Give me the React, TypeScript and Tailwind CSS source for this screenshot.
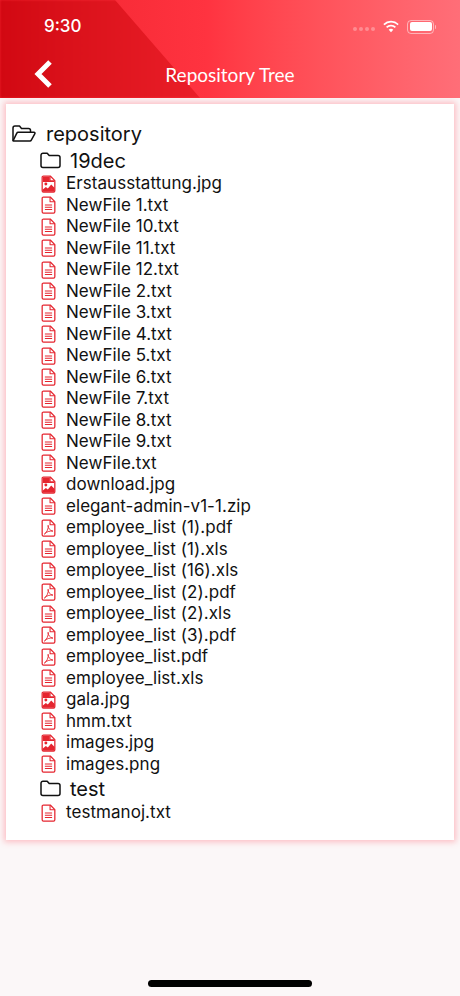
type Kind = 'txt' | 'img' | 'pdf'

const files: [string, Kind][] = [
    ['Erstausstattung.jpg', 'img'],
    ['NewFile 1.txt', 'txt'],
    ['NewFile 10.txt', 'txt'],
    ['NewFile 11.txt', 'txt'],
    ['NewFile 12.txt', 'txt'],
    ['NewFile 2.txt', 'txt'],
    ['NewFile 3.txt', 'txt'],
    ['NewFile 4.txt', 'txt'],
    ['NewFile 5.txt', 'txt'],
    ['NewFile 6.txt', 'txt'],
    ['NewFile 7.txt', 'txt'],
    ['NewFile 8.txt', 'txt'],
    ['NewFile 9.txt', 'txt'],
    ['NewFile.txt', 'txt'],
    ['download.jpg', 'img'],
    ['elegant-admin-v1-1.zip', 'txt'],
    ['employee_list (1).pdf', 'pdf'],
    ['employee_list (1).xls', 'txt'],
    ['employee_list (16).xls', 'txt'],
    ['employee_list (2).pdf', 'pdf'],
    ['employee_list (2).xls', 'txt'],
    ['employee_list (3).pdf', 'pdf'],
    ['employee_list.pdf', 'pdf'],
    ['employee_list.xls', 'txt'],
    ['gala.jpg', 'img'],
    ['hmm.txt', 'txt'],
    ['images.jpg', 'img'],
    ['images.png', 'txt'],
]

const DOC = "M2.5 .8H9.500L14.200 5.500V16a1.300 1.300 0 0 1-1.300 1.300H2.500A1.300 1.300 0 0 1 1.200 16V2.100A1.300 1.300 0 0 1 2.500 .8z"

function FileIcon({ kind }: { kind: Kind }) {
    return (
        <svg width="15" height="18" viewBox="0 0 15.400 18" fill="none" stroke="#e5252f" strokeWidth="1.300" strokeLinejoin="round">
            <path d={DOC} />
            <path d="M9.300 1V5.700H14" strokeWidth="1.100" />
            {kind === 'txt' && (
                <path d="M4 9H11.400M4 11.300H11.400M4 13.600H11.400" strokeWidth="1.200" />
            )}
            {kind === 'pdf' && (
                <path d="M3.400 15.300C6 13.500 8 9.500 7.300 6.200C7.300 9 9 11.800 12.300 12.200C9 11.800 5.500 12.800 3.400 15.300Z" strokeWidth="0.900" />
            )}
            {kind === 'img' && (
                <>
                    <path d="M2 1.500H9V6H13.500V7H2Z" fill="#e5252f" stroke="none" />
                    <circle cx="5" cy="9" r="1.500" fill="#e5252f" stroke="none" />
                    <path d="M1.500 15L5 12.200L7 13.500L10.500 9.500L14 13V17H1.500Z" fill="#e5252f" stroke="none" />
                </>
            )}
        </svg>
    )
}

function FolderIcon() {
    return (
        <svg width="21" height="17" viewBox="0 0 21 17" fill="none" stroke="#111" strokeWidth="1.500" strokeLinejoin="round">
            <path d="M1 3.200A2 2 0 0 1 3 1.200H7.200L9.200 3.600H18A2 2 0 0 1 20 5.600V13.500A2 2 0 0 1 18 15.500H3A2 2 0 0 1 1 13.500Z" />
        </svg>
    )
}

function FolderOpenIcon() {
    return (
        <svg width="24" height="18" viewBox="0 0 24 18" fill="none" stroke="#111" strokeWidth="1.500" strokeLinejoin="round">
            <path d="M1 15.800V3A2 2 0 0 1 3 1H7.500L9.500 3.400H16.500A2 2 0 0 1 18.500 5.400V7.300" />
            <path d="M1 15.800L4.800 8.200A1.500 1.500 0 0 1 6.100 7.300H22A1 1 0 0 1 22.900 8.700L19.300 15.200A1.500 1.500 0 0 1 18 16H1.500Z" />
        </svg>
    )
}

function FileRow({ name, kind }: { name: string; kind: Kind }) {
    return (
        <div className="flex h-[21.5px] items-center pl-[35px]">
            <div className="flex w-[25px] shrink-0">
                <FileIcon kind={kind} />
            </div>
            <span className="text-[17px] leading-none tracking-[0.05px] text-[#111]">{name}</span>
        </div>
    )
}

function StatusIcons() {
    return (
        <div className="flex items-center">
            <div className="mr-[7px] mt-[5px] flex gap-[2px]">
                <span className="h-[4px] w-[4px] rounded-full bg-white/30" />
                <span className="h-[4px] w-[4px] rounded-full bg-white/30" />
                <span className="h-[4px] w-[4px] rounded-full bg-white/30" />
                <span className="h-[4px] w-[4px] rounded-full bg-white/30" />
            </div>
            <svg width="18" height="14" viewBox="0 0 18 14" fill="white">
                <path d="M9 2.600c2.500 0 4.800 1 6.500 2.600l1.200-1.300A11.200 11.200 0 0 0 9 .8 11.200 11.200 0 0 0 1.300 3.900l1.200 1.300A9.400 9.400 0 0 1 9 2.600z" />
                <path d="M9 6.500c1.400 0 2.700.5 3.700 1.500l1.300-1.300A7.200 7.200 0 0 0 9 4.700a7.200 7.200 0 0 0-5 2l1.300 1.300c1-1 2.300-1.500 3.700-1.500z" />
                <path d="M9 8.800c-.9 0-1.700.3-2.300.9L9 12.200l2.300-2.500c-.6-.6-1.400-.9-2.300-.9z" />
            </svg>
            <div className="ml-[7px] flex items-center">
                <div className="rounded-[4px] border border-white/50 p-[1.500px]">
                    <div className="h-[9px] w-[22px] rounded-[2px] bg-white" />
                </div>
                <div className="ml-[1px] h-[4px] w-[1px] rounded-r bg-white/50" />
            </div>
        </div>
    )
}

export default function App() {
    return (
        <div className="flex min-h-[996px] flex-col bg-[#fbf7f8] font-['Inter',sans-serif]">
            <header className="relative h-[98px] overflow-hidden bg-gradient-to-r from-[#f0222c] via-[#ff3340] via-[45%] to-[#ff6e78]">
                {/* darker diagonal sweep on the left of the bar */}
                <div className="absolute inset-0 bg-gradient-to-r from-[#d20812] to-[#ea1e28] to-[200px] blur-[1px] [clip-path:polygon(0_0,115px_0,200px_100%,0_100%)]" />
                <div className="relative flex h-[52px] items-center justify-between pl-[44px] pr-[24px] pt-[1px]">
                    <span className="text-[17px] font-medium leading-none text-white">9:30</span>
                    <StatusIcons />
                </div>
                <div className="relative flex h-[44px] items-center justify-center">
                    <svg className="absolute left-[33px] top-[7px]" width="20" height="30" viewBox="0 0 20 30" fill="none">
                        <path d="M17 3 5 15l12 12" stroke="white" strokeWidth="5" />
                    </svg>
                    <span className="font-['Lato',sans-serif] text-[19px] leading-none text-white">Repository Tree</span>
                </div>
            </header>

            <main className="mx-[6px] mt-[6px] h-[736px] bg-white pt-[16px] shadow-[0_0_6px_2px_rgba(255,120,130,0.45)]">
                <div className="flex h-[27px] items-center pl-[6px]">
                    <div className="mr-[10px]">
                        <FolderOpenIcon />
                    </div>
                    <span className="text-[20px] leading-none text-[#111]">repository</span>
                </div>
                <div className="flex h-[27px] items-center pl-[34px]">
                    <div className="mr-[9px]">
                        <FolderIcon />
                    </div>
                    <span className="text-[20px] leading-none text-[#111]">19dec</span>
                </div>
                <div className="-mt-[1px]">
                    {files.map(([name, kind]) => (
                        <FileRow key={name} name={name} kind={kind} />
                    ))}
                </div>
                <div className="flex h-[27px] items-center pl-[34px]">
                    <div className="mr-[9px]">
                        <FolderIcon />
                    </div>
                    <span className="text-[20px] leading-none text-[#111]">test</span>
                </div>
                <FileRow name="testmanoj.txt" kind="txt" />
            </main>

            <div className="mt-auto flex justify-center pb-[9px]">
                <div className="h-[7px] w-[164px] rounded-full bg-black" />
            </div>
        </div>
    )
}
